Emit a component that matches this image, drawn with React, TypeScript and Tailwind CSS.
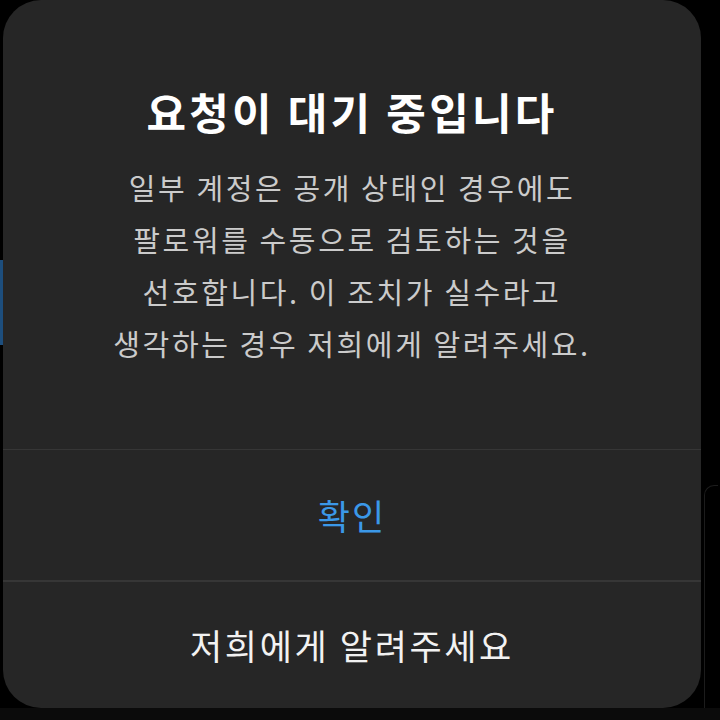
import React from "react";

const font = { fontFamily: '"Noto Sans CJK KR", "Noto Sans", sans-serif' };

export default function App() {
  return (
    <div className="relative w-[720px] h-[720px] bg-black overflow-hidden" style={font}>
      {/* faint background bits peeking around the sheet */}
      <div className="absolute left-0 top-[260px] w-[4px] h-[85px] bg-[#1d4e7d]" />
      <div className="absolute right-[2px] top-[485px] w-[14px] h-[240px] rounded-tl-[10px] border-l border-t border-[#1c1c1c]" />
      <div className="absolute left-0 bottom-0 w-full h-[12px] bg-[#0b0b0b]" />

      <div className="relative ml-[3px] w-[698px] h-[708px] bg-[#262626] rounded-[38px] flex flex-col">
        <div className="flex flex-col items-center pt-[83px] h-[449px]">
          <h1 className="text-[43px] leading-[56px] font-bold text-white tracking-[0.075em]">
            요청이 대기 중입니다
          </h1>
          <p className="mt-[22px] text-[29px] leading-[52px] text-[#cbcbcb] text-center tracking-[0.09em]">
            일부 계정은 공개 상태인 경우에도
            <br />
            팔로워를 수동으로 검토하는 것을
            <br />
            선호합니다. 이 조치가 실수라고
            <br />
            생각하는 경우 저희에게 알려주세요.
          </p>
        </div>
        <div className="h-px bg-[#363636]" />
        <button className="h-[130px] flex items-center justify-center text-[35px] text-[#3b98e8] tracking-[0.06em]">
          확인
        </button>
        <div className="h-[2px] bg-[#363636]" />
        <button className="flex-1 flex items-center justify-center text-[35px] text-[#f2f2f2] tracking-[0.075em]">
          저희에게 알려주세요
        </button>
      </div>
    </div>
  );
}
